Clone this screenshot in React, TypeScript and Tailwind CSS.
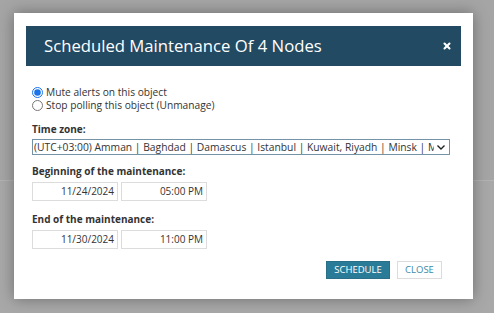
import { X } from 'lucide-react'

function DateTimeRow({ date, time }: { date: string; time: string }) {
  return (
    <div className="flex gap-[3px]">
      <div className="w-[86px] h-[19px] border border-[#dcdcdc] bg-white text-right pr-[3px] leading-[17px]">{date}</div>
      <div className="w-[86px] h-[19px] border border-[#dcdcdc] bg-white text-right pr-[3px] leading-[17px]">{time}</div>
    </div>
  )
}

export default function App() {
  return (
    <div className="relative w-[494px] h-[313px] overflow-hidden bg-[#a5a5a5] font-['Open_Sans',sans-serif]">
      {/* page behind overlay */}
      <div className="absolute left-0 right-0 top-[180px] h-px bg-[#b3b3b3]" />
      <div className="absolute left-0 right-0 top-[181px] bottom-0 bg-[#a8a8a8]" />

      <div className="relative ml-[14px] mt-[13px] w-[459px] h-[286px] bg-white shadow-[0_0_14px_rgba(0,0,0,0.35)] px-[12px] pt-[13px]">
        <div className="h-[40px] bg-[#224a63] flex items-center justify-between pl-[18px] pr-[9px]">
          <h1 className="text-white text-[16.7px] leading-none">Scheduled Maintenance Of 4 Nodes</h1>
          <X className="w-[10px] h-[10px] text-white" strokeWidth={5} />
        </div>

        <div className="pl-[6px] pr-[11px] text-[10px] text-[#333]">
          <div className="mt-[20px] leading-[13px] text-[10.2px]">
            <label className="flex items-center gap-[3px]">
              <input type="radio" name="m" defaultChecked className="w-[11px] h-[11px] m-0 accent-[#1a73e8]" />
              <span>Mute alerts on this object</span>
            </label>
            <label className="flex items-center gap-[3px]">
              <input type="radio" name="m" className="w-[11px] h-[11px] m-0" />
              <span>Stop polling this object (Unmanage)</span>
            </label>
          </div>

          <div className="mt-[10px] font-bold leading-[15px]">Time zone:</div>
          <div className="mt-[2px] h-[16px] border border-[#7493a6] flex items-center pl-[1px] pr-[3px] whitespace-nowrap overflow-hidden">
            <span className="flex-1 overflow-hidden leading-[14px] text-[10.3px]">(UTC+03:00) Amman | Baghdad | Damascus | Istanbul | Kuwait, Riyadh | Minsk | Moscow, St. Petersburg</span>
            <svg width="10" height="10" viewBox="0 0 10 10" className="ml-[2px] shrink-0">
              <path d="M1.5 3.5 L5 7 L8.5 3.5" fill="none" stroke="#222" strokeWidth="1.4" />
            </svg>
          </div>

          <div className="mt-[9px] font-bold leading-[15px]">Beginning of the maintenance:</div>
          <div className="mt-[3px]">
            <DateTimeRow date="11/24/2024" time="05:00 PM" />
          </div>

          <div className="mt-[11px] font-bold leading-[15px]">End of the maintenance:</div>
          <div className="mt-[3px]">
            <DateTimeRow date="11/30/2024" time="11:00 PM" />
          </div>

          <div className="mt-[12px] flex justify-end gap-[7px] pr-[8px]">
            <button className="w-[64px] h-[18px] bg-[#2a7b97] border border-[#2a6f88] text-white text-[9.5px] leading-none">SCHEDULE</button>
            <button className="w-[45px] h-[18px] bg-white border border-[#dcdcdc] text-[#3a8aa8] text-[9.5px] leading-none">CLOSE</button>
          </div>
        </div>
      </div>
    </div>
  )
}
